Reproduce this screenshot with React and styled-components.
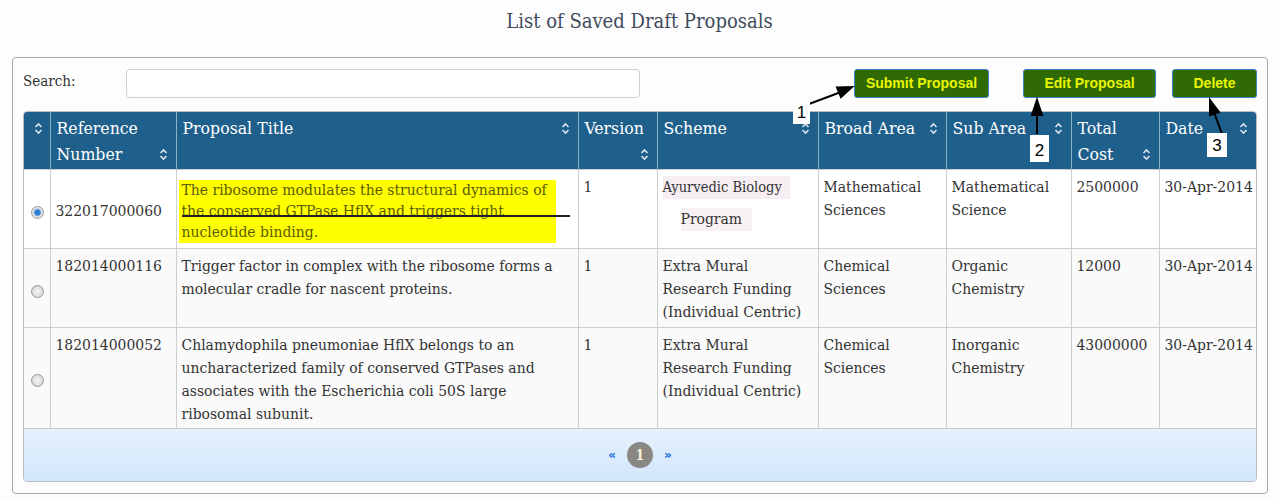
import React from "react";
import styled, { createGlobalStyle } from "styled-components";

const GlobalStyle = createGlobalStyle`
  body {
    margin: 0;
    background: #fdfdfd;
    font-family: "DejaVu Serif Condensed", "DejaVu Serif", serif;
    color: #333;
  }
`;

const Page = styled.div`
  position: relative;
  width: 1279px;
  height: 500px;
  overflow: hidden;
`;

const Title = styled.h2`
  margin: 0;
  padding-top: 9px;
  height: 57px;
  box-sizing: border-box;
  text-align: center;
  font-size: 20px;
  line-height: 24px;
  font-weight: 400;
  color: #3d4b5c;
`;

const Panel = styled.div`
  margin: 0 11px 0 12px;
  border: 1px solid #a9a9a9;
  border-radius: 4px;
  padding: 11px 10px 11px 10px;
`;

const Toolbar = styled.div`
  display: flex;
  align-items: center;
  height: 29px;
  margin-bottom: 13px;
`;

const SearchLabel = styled.label`
  width: 103px;
  font-size: 15px;
  align-self: flex-start;
  padding-top: 3px;
`;

const SearchInput = styled.input`
  width: 514px;
  height: 29px;
  box-sizing: border-box;
  border: 1px solid #cfcfcf;
  border-radius: 4px;
  background: #fff;
`;

const ActionButton = styled.button`
  height: 29px;
  width: ${(p) => p.$w}px;
  margin-left: ${(p) => p.$gap}px;
  background: #2f6a05;
  border: 1px solid #3f82c8;
  border-radius: 3px;
  color: #e9f500;
  font-family: "Liberation Sans", Arial, sans-serif;
  font-weight: 700;
  font-size: 14px;
  padding: 0 0 1px;
`;

const Spacer = styled.div`
  flex: 1;
`;

const TableBox = styled.div`
  border: 1px solid #bdbdbd;
  border-radius: 4px;
  overflow: hidden;
`;

const Table = styled.table`
  width: 100%;
  table-layout: fixed;
  border-collapse: collapse;
`;

const HeadRow = styled.tr`
  background: #1f5f8b;
  height: 57px;
`;

const Th = styled.th`
  vertical-align: top;
  text-align: left;
  padding: 3px 8px 2px 6px;
  font-size: 17.5px;
  line-height: 26px;
  font-weight: 400;
  color: #fff;
  border-left: 1px solid #8fb0c8;
  &:first-child {
    border-left: none;
    padding: 3px 0 0;
  }
`;

const HeadInner = styled.div`
  display: flex;
  flex-direction: ${(p) => (p.$stack ? "column" : "row")};
  justify-content: ${(p) => (p.$center ? "center" : "space-between")};
  align-items: flex-end;
  & > span:first-child {
    align-self: ${(p) => (p.$stack ? "flex-start" : "auto")};
  }
`;

const IconSlot = styled.span`
  display: flex;
  align-items: center;
  justify-content: center;
  height: 26px;
  margin-left: 4px;
  flex-shrink: 0;
`;

const Row = styled.tr`
  height: ${(p) => p.$h}px;
  background: ${(p) => (p.$alt ? "#fafafa" : "#fff")};
  border-top: 1px solid #cfcfcf;
`;

const Td = styled.td`
  vertical-align: ${(p) => (p.$middle ? "middle" : "top")};
  text-align: ${(p) => (p.$center ? "center" : "left")};
  padding: 6px 3px 1px 5px;
  font-size: 15.5px;
  line-height: 23px;
  border-left: 1px solid #cfcfcf;
  &:first-child {
    border-left: none;
  }
`;

const Radio = styled.span`
  display: inline-block;
  width: 11px;
  height: 11px;
  border-radius: 50%;
  border: 1px solid #9a9a9a;
  vertical-align: middle;
  background: ${(p) =>
    p.$checked
      ? "radial-gradient(circle, #2a7fd4 0 2.5px, #9dc3e8 3.5px, #e4e4e4 4.5px)"
      : "radial-gradient(circle, #f4f4f4 0, #cfcfcf 100%)"};
`;

const Highlight = styled.div`
  position: relative;
  width: 371px;
  margin-top: 4px;
  margin-left: -3px;
  padding: 0 3px;
  background: #ffff00;
  color: #5c5a00;
  line-height: 21px;
`;

const StrikeLine = styled.span`
  position: absolute;
  left: 3px;
  top: 35px;
  width: 388px;
  height: 2px;
  background: #1f1f2a;
`;

const SchemeFirst = styled.div`
  display: inline-block;
  font-size: 14.5px;
  background: #f6eef3;
  padding-right: 8px;
`;

const SchemeSecond = styled.div`
  display: inline-block;
  margin: 9px 0 0 18px;
  padding-right: 10px;
  background: #f8f1f4;
`;

const Footer = styled.div`
  height: 52px;
  border-top: 1px solid #c9c9c9;
  background: linear-gradient(#e6f1fd, #d2e6fb);
  display: flex;
  align-items: center;
  justify-content: center;
  gap: 11px;
`;

const PageArrow = styled.span`
  color: #1d6fd8;
  font-size: 12px;
  font-weight: 700;
  font-family: "DejaVu Sans", sans-serif;
`;

const PageDot = styled.span`
  width: 26px;
  height: 26px;
  border-radius: 50%;
  background: #8a8682;
  color: #f8f3d8;
  font-weight: 700;
  font-size: 14px;
  display: flex;
  align-items: center;
  justify-content: center;
`;

const Overlay = styled.svg`
  position: absolute;
  left: 0;
  top: 0;
  pointer-events: none;
`;

const Callout = styled.span`
  position: absolute;
  left: ${(p) => p.$x}px;
  top: ${(p) => p.$y}px;
  width: ${(p) => p.$w}px;
  height: ${(p) => p.$h}px;
  background: #fff;
  color: #000;
  font-family: "Liberation Sans", Arial, sans-serif;
  font-size: 17px;
  display: flex;
  align-items: flex-end;
  justify-content: center;
  padding-bottom: 1px;
  box-sizing: border-box;
`;

const SortIcon = () => (
  <svg width="9" height="13" viewBox="0 0 9 13">
    <path d="M1.5 5 L4.5 2 L7.5 5 M1.5 8 L4.5 11 L7.5 8" fill="none" stroke="#dce6ee" strokeWidth="1.6" />
  </svg>
);

const columns = [
  { w: 26, label: "" },
  { w: 126, label: "Reference Number" },
  { w: 402, label: "Proposal Title" },
  { w: 79, label: "Version", stack: true },
  { w: 161, label: "Scheme" },
  { w: 128, label: "Broad Area" },
  { w: 125, label: "Sub Area" },
  { w: 88, label: "Total Cost" },
  { w: 97, label: "Date" },
];

const rows = [
  {
    ref: "182014000116",
    title: "Trigger factor in complex with the ribosome forms a molecular cradle for nascent proteins.",
    scheme: "Extra Mural Research Funding (Individual Centric)",
    broad: "Chemical Sciences",
    sub: "Organic Chemistry",
    cost: "12000",
    h: 79,
  },
  {
    ref: "182014000052",
    title:
      "Chlamydophila pneumoniae HflX belongs to an uncharacterized family of conserved GTPases and associates with the Escherichia coli 50S large ribosomal subunit.",
    scheme: "Extra Mural Research Funding (Individual Centric)",
    broad: "Chemical Sciences",
    sub: "Inorganic Chemistry",
    cost: "43000000",
    h: 100,
  },
];

export default function App() {
  return (
    <Page>
      <GlobalStyle />
      <Title>List of Saved Draft Proposals</Title>
      <Panel>
        <Toolbar>
          <SearchLabel>Search:</SearchLabel>
          <SearchInput type="text" />
          <Spacer />
          <ActionButton $w={135} $gap={0}>Submit Proposal</ActionButton>
          <ActionButton $w={133} $gap={34}>Edit Proposal</ActionButton>
          <ActionButton $w={85} $gap={16}>Delete</ActionButton>
        </Toolbar>
        <TableBox>
          <Table>
            <colgroup>
              {columns.map((c, i) => (
                <col key={i} width={c.w} />
              ))}
            </colgroup>
            <thead>
              <HeadRow>
                {columns.map((c, i) => (
                  <Th key={i}>
                    <HeadInner $stack={c.stack} $center={!c.label}>
                      {c.label && <span>{c.label}</span>}
                      <IconSlot>
                        <SortIcon />
                      </IconSlot>
                    </HeadInner>
                  </Th>
                ))}
              </HeadRow>
            </thead>
            <tbody>
              <Row $h={79}>
                <Td $middle $center>
                  <Radio $checked />
                </Td>
                <Td $middle>322017000060</Td>
                <Td>
                  <Highlight>
                    The ribosome modulates the structural dynamics of the conserved GTPase HflX and triggers tight
                    nucleotide binding.
                    <StrikeLine />
                  </Highlight>
                </Td>
                <Td>1</Td>
                <Td>
                  <SchemeFirst>Ayurvedic Biology</SchemeFirst>
                  <br />
                  <SchemeSecond>Program</SchemeSecond>
                </Td>
                <Td>Mathematical Sciences</Td>
                <Td>Mathematical Science</Td>
                <Td>2500000</Td>
                <Td>30-Apr-2014</Td>
              </Row>
              {rows.map((r) => (
                <Row key={r.ref} $h={r.h} $alt>
                  <Td $middle $center>
                    <Radio />
                  </Td>
                  <Td>{r.ref}</Td>
                  <Td>{r.title}</Td>
                  <Td>1</Td>
                  <Td>{r.scheme}</Td>
                  <Td>{r.broad}</Td>
                  <Td>{r.sub}</Td>
                  <Td>{r.cost}</Td>
                  <Td>30-Apr-2014</Td>
                </Row>
              ))}
            </tbody>
          </Table>
          <Footer>
            <PageArrow>«</PageArrow>
            <PageDot>1</PageDot>
            <PageArrow>»</PageArrow>
          </Footer>
        </TableBox>
      </Panel>

      <Overlay width="1279" height="500">
        <g stroke="#000" strokeWidth="2" fill="#000">
          <line x1="809" y1="104" x2="841" y2="92" />
          <polygon points="852,87 841,97 837,87.5" />
          <line x1="1037" y1="134" x2="1037" y2="112" />
          <polygon points="1037,100 1042,115 1032,115" />
          <line x1="1222" y1="134" x2="1214" y2="112" />
          <polygon points="1210,100 1219,112 1210,115" />
        </g>
      </Overlay>
      <Callout $x={793} $y={102} $w={17} $h={22}>1</Callout>
      <Callout $x={1030} $y={135} $w={19} $h={27}>2</Callout>
      <Callout $x={1207} $y={133} $w={20} $h={24}>3</Callout>
    </Page>
  );
}
